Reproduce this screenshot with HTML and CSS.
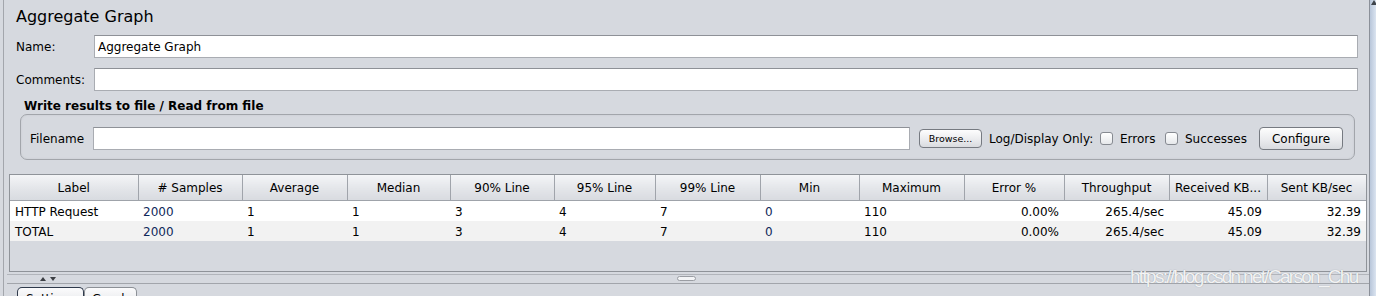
FILE: index.html
```html
<!DOCTYPE html>
<html lang="en">
<head>
  <meta charset="UTF-8" />
  <title>Aggregate Graph</title>
  <link rel="stylesheet" href="styles.css">
</head>
<body>
  <div class="edge"></div>

  <div class="panel">
    <div class="form">
      <div class="title">Aggregate Graph</div>

      <div class="row first">
        <label class="lbl">Name:</label>
        <input class="field" type="text" value="Aggregate Graph" />
      </div>
      <div class="row">
        <label class="lbl">Comments:</label>
        <input class="field" type="text" />
      </div>

      <div class="group-title">Write results to file / Read from file</div>
      <div class="group">
        <label class="fname">Filename</label>
        <input class="field grow" type="text" />
        <button class="btn small">Browse...</button>
        <span class="txt log">Log/Display Only:</span>
        <span class="check"></span><span class="txt errors">Errors</span>
        <span class="check"></span><span class="txt successes">Successes</span>
        <button class="btn configure">Configure</button>
      </div>
    </div>

    <div class="results">
      <table>
        <colgroup>
          <col style="width:128px"><col style="width:104px"><col style="width:105px">
          <col style="width:103px"><col style="width:104px"><col style="width:101px">
          <col style="width:105px"><col style="width:99px"><col style="width:105px">
          <col style="width:100px"><col style="width:105px"><col style="width:98px">
          <col style="width:99px">
        </colgroup>
        <thead>
          <tr>
            <th>Label</th><th># Samples</th><th>Average</th><th>Median</th>
            <th>90% Line</th><th>95% Line</th><th>99% Line</th><th>Min</th>
            <th>Maximum</th><th>Error %</th><th>Throughput</th><th>Received KB...</th>
            <th>Sent KB/sec</th>
          </tr>
        </thead>
        <tbody>
          <tr>
            <td>HTTP Request</td><td class="num">2000</td><td>1</td><td>1</td>
            <td>3</td><td>4</td><td>7</td><td class="num">0</td><td>110</td>
            <td class="r">0.00%</td><td class="r">265.4/sec</td><td class="r">45.09</td>
            <td class="r">32.39</td>
          </tr>
          <tr class="alt">
            <td>TOTAL</td><td class="num">2000</td><td>1</td><td>1</td>
            <td>3</td><td>4</td><td>7</td><td class="num">0</td><td>110</td>
            <td class="r">0.00%</td><td class="r">265.4/sec</td><td class="r">45.09</td>
            <td class="r">32.39</td>
          </tr>
        </tbody>
      </table>
    </div>

    <div class="divider">
      <span class="arrows"><span class="up"></span><span class="down"></span></span>
      <span class="grip"></span>
    </div>

    <div class="tabs">
      <span class="tab active">Settings</span>
      <span class="tab graph">Graph</span>
    </div>
  </div>

  <div class="scroll"><span class="scroll-up"></span></div>

  <div class="watermark">https://blog.csdn.net/Carson_Chu</div>
</body>
</html>
```

FILE: styles.css
```css
html, body {
  margin: 0;
  height: 296px;
  overflow: hidden;
}
body {
  display: flex;
  background: #d6d9df;
  color: #000;
  font-family: "DejaVu Sans", sans-serif;
  font-size: 12px;
  position: relative;
}
.edge {
  width: 3px;
  flex: none;
  border-right: 1px solid #a3a6ac;
}
.panel {
  flex: 1;
  min-width: 0;
}
.form {
  padding: 0 11px 0 12px;
}
.title {
  font-size: 16px;
  line-height: 20px;
  padding-top: 7px;
}
.row {
  display: flex;
  align-items: center;
  margin-top: 10px;
}
.row.first {
  margin-top: 8px;
}
.lbl {
  width: 78px;
  flex: none;
}
.field {
  flex: 1;
  height: 23px;
  box-sizing: border-box;
  border: 1px solid #a9acb2;
  border-top-color: #8e9197;
  background: #fff;
  font-family: "DejaVu Sans", sans-serif;
  font-size: 12px;
  padding: 0 3px;
  margin: 0;
  outline: none;
}
.group-title {
  font-weight: bold;
  line-height: 15px;
  margin: 8px 0 0 8px;
}
.group {
  display: flex;
  align-items: center;
  margin: 0 3px 0 4px;
  padding: 12px 11px 9px 9px;
  border: 1px solid #a2a5ab;
  border-radius: 7px;
  box-shadow: inset 0 0 2px #c4c7cd;
}
.fname {
  width: 63px;
  flex: none;
}
.grow {
  min-width: 0;
}
.btn {
  flex: none;
  box-sizing: border-box;
  border: 1px solid #767a81;
  border-radius: 4px;
  background: linear-gradient(#fdfdfd, #e9eaed 60%, #d9dbdf);
  font-family: "DejaVu Sans", sans-serif;
  color: #000;
  padding: 0;
  margin: 0;
}
.btn.small {
  width: 63px;
  height: 19px;
  font-size: 9.5px;
  margin-left: 9px;
}
.btn.configure {
  width: 84px;
  height: 23px;
  font-size: 12px;
  margin-left: 8px;
}
.txt {
  flex: none;
  margin-left: 7px;
  white-space: nowrap;
}
.txt.log {
  width: 103px;
}
.txt.errors {
  width: 37px;
}
.txt.successes {
  width: 66px;
}
.check {
  flex: none;
  width: 13px;
  height: 13px;
  box-sizing: border-box;
  margin-left: 8px;
  border: 1px solid #868a91;
  border-radius: 3px;
  background: linear-gradient(#ffffff, #e6e8eb);
}
.results {
  margin: 14px 2px 0 5px;
  height: 98px;
  box-sizing: border-box;
  border: 1px solid #8f9399;
  overflow: hidden;
}
table {
  border-collapse: collapse;
  table-layout: fixed;
  width: 1356px;
}
th {
  height: 25px;
  box-sizing: border-box;
  padding: 1px 0 0;
  font-weight: normal;
  text-align: center;
  white-space: nowrap;
  border-right: 1px solid #a0a4ab;
  border-bottom: 1px solid #9fa3aa;
  background: linear-gradient(#f4f5f7, #e3e5e9 55%, #d8dbe0);
}
td {
  height: 20px;
  box-sizing: border-box;
  padding: 2px 5px 0;
  line-height: 18px;
  background: #fff;
  white-space: nowrap;
}
tr.alt td {
  background: #f2f2f2;
}
td.r {
  text-align: right;
}
td.num {
  color: #10295a;
}
.divider {
  position: relative;
  margin: 2px 0 0 3px;
  height: 8px;
  border-top: 1px solid #b2b5bb;
  border-bottom: 1px solid #a2a5ab;
}
.arrows {
  position: absolute;
  left: 33px;
  top: 2px;
  display: flex;
  gap: 4px;
}
.up, .down {
  width: 0;
  height: 0;
  border-left: 3px solid transparent;
  border-right: 3px solid transparent;
}
.up {
  border-bottom: 4px solid #3c3f44;
}
.down {
  border-top: 4px solid #3c3f44;
}
.grip {
  position: absolute;
  left: 670px;
  top: 1px;
  width: 17px;
  height: 3px;
  border: 1px solid #9a9da3;
  border-radius: 3px;
  background: #f3f4f6;
}
.tabs {
  display: flex;
  margin: 3px 0 0 13px;
}
.tab {
  height: 14px;
  padding-top: 4px;
  text-align: center;
  border: 1px solid #8c9096;
  border-bottom: none;
  border-radius: 5px 5px 0 0;
  background: linear-gradient(#fbfbfc, #e4e6e9);
}
.tab.active {
  width: 65px;
  border-color: #2f3a4b;
}
.tab.graph {
  width: 51px;
}
.scroll {
  width: 6px;
  flex: none;
  border-left: 1px solid #8b9099;
  background: linear-gradient(to right, #b8c6da, #dbe4f0);
  position: relative;
}
.scroll-up {
  position: absolute;
  left: 1px;
  top: 0;
  width: 0;
  height: 0;
  border-left: 3px solid transparent;
  border-right: 3px solid transparent;
  border-bottom: 5px solid #3f444b;
}
.watermark {
  position: absolute;
  left: 1130px;
  top: 266px;
  font-family: "Liberation Sans", Arial, sans-serif;
  font-size: 19px;
  letter-spacing: -1.7px;
  color: rgba(255, 255, 255, 0.9);
  text-shadow: 0 0 1px #8f949b;
  white-space: nowrap;
}
```
